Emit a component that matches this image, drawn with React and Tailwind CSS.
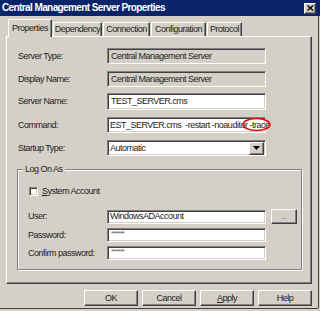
import React from "react";

const sunken =
  "border border-t-[#808080] border-l-[#808080] border-b-white border-r-white shadow-[inset_1px_1px_0_#404040,inset_-1px_-1px_0_#d4d0c8]";
const raised =
  "border border-t-white border-l-white border-b-[#404040] border-r-[#404040] shadow-[inset_-1px_-1px_0_#808080]";

function Row({ label, children, top }) {
  return (
    <div className={`flex items-center ${top}`}>
      <div className="w-[100px] pl-[11px] whitespace-nowrap">{label}</div>
      {children}
    </div>
  );
}

function Btn({ children }) {
  return (
    <div className={`${raised} w-[54px] h-[16px] flex items-center justify-center bg-[#d4d0c8]`}>
      {children}
    </div>
  );
}

export default function App() {
  const tabs = [
    ["Dependency", "w-[49px]"],
    ["Connection", "w-[47px]"],
    ["Configuration", "w-[55px]"],
    ["Protocol", "w-[35px]"],
  ];
  return (
    <div className="w-[320px] h-[311px] bg-[#d4d0c8] overflow-hidden font-['Liberation_Sans',Arial,sans-serif] text-[9px] tracking-[-0.5px] leading-none text-[#1c1c1c] flex flex-col">
      {/* title bar */}
      <div className="h-[16px] shrink-0 bg-[#0a246a] flex items-center justify-between pl-[2px] pr-[4px]">
        <span className="text-white font-bold text-[10px] tracking-[-0.6px]">Central Management Server Properties</span>
        <div className={`${raised} w-[12px] h-[11px] bg-[#d4d0c8] flex items-center justify-center`}>
          <svg width="7" height="6" viewBox="0 0 7 6">
            <path d="M0.5 0.5 L6 5.5 M6 0.5 L0.5 5.5" stroke="#000" strokeWidth="1.4" />
          </svg>
        </div>
      </div>

      <div className="flex flex-1">
        <div className="w-[318px] flex flex-col">
          <div className="pl-[6px] pr-[6px] pt-[2px] flex flex-col">
            {/* tabs */}
            <div className="h-[18px] flex items-end pl-[2px] relative z-10">
              <div className="h-[18px] w-[44px] bg-[#d4d0c8] border-t border-l border-t-white border-l-white border-r border-r-[#404040] shadow-[inset_-1px_0_0_#808080] flex items-center justify-center pb-[1px] -mb-[1px]">
                Properties
              </div>
              {tabs.map(([t, w]) => (
                <div
                  key={t}
                  className={`${w} h-[14px] ml-[1px] border-t border-l border-t-white border-l-white border-r border-r-[#404040] shadow-[inset_-1px_0_0_#808080] flex items-center justify-center`}
                >
                  {t}
                </div>
              ))}
            </div>
            {/* panel */}
            <div className={`${raised} h-[248px] flex flex-col`}>
              <Row label="Server Type:" top="mt-[11px]">
                <div className={`${sunken} w-[159px] h-[16px] flex items-center pl-[3px]`}>Central Management Server</div>
              </Row>
              <Row label="Display Name:" top="mt-[7px]">
                <div className={`${sunken} w-[159px] h-[16px] flex items-center pl-[3px]`}>Central Management Server</div>
              </Row>
              <Row label="Server Name:" top="mt-[6px]">
                <div className={`${sunken} w-[159px] h-[17px] bg-white flex items-center pl-[3px]`}>TEST_SERVER.cms</div>
              </Row>
              <Row label="Command:" top="mt-[7px]">
                <div className={`${sunken} w-[159px] h-[16px] bg-white flex items-center pl-[2px] relative overflow-visible whitespace-nowrap`}>
                  <span>EST_SERVER.cms&nbsp; -restart -noauditor -trace</span>
                  <svg className="absolute left-[134px] -top-[1px]" width="30" height="15" viewBox="0 0 30 15">
                    <ellipse cx="14.5" cy="7.5" rx="13.5" ry="6" fill="none" stroke="#e01010" strokeWidth="1.5" />
                  </svg>
                </div>
              </Row>
              <Row label="Startup Type:" top="mt-[7px]">
                <div className={`${sunken} w-[159px] h-[16px] bg-white flex items-center justify-between pl-[2px] pr-[1px]`}>
                  <span>Automatic</span>
                  <div className={`${raised} w-[15px] h-[13px] bg-[#d4d0c8] flex items-center justify-center`}>
                    <svg width="7" height="4" viewBox="0 0 7 4">
                      <path d="M0 0 H7 L3.5 4 Z" fill="#000" />
                    </svg>
                  </div>
                </div>
              </Row>

              {/* group box */}
              <div className="ml-[10px] mr-[9px] mt-[13px] h-[101px] relative border border-[#808080] shadow-[1px_1px_0_white,inset_1px_1px_0_white] flex flex-col">
                <div className="absolute -top-[5px] left-[5px] bg-[#d4d0c8] px-[2px]">Log On As</div>
                <div className="flex items-center ml-[11px] mt-[17px]">
                  <div className={`${sunken} w-[9px] h-[9px] bg-white`} />
                  <span className="ml-[4px]"><span className="underline">S</span>ystem Account</span>
                </div>
                <div className="flex items-center mt-[13px]">
                  <div className="w-[89px] pl-[10px] whitespace-nowrap">User:</div>
                  <div className={`${sunken} w-[159px] h-[14px] bg-white flex items-center pl-[2px]`}>WindowsADAccount</div>
                  <div className={`${raised} ml-[5px] w-[26px] h-[15px] flex items-center justify-center text-[#808080]`}>...</div>
                </div>
                <div className="flex items-center mt-[4px]">
                  <div className="w-[89px] pl-[10px] whitespace-nowrap">Password:</div>
                  <div className={`${sunken} w-[159px] h-[14px] bg-white flex items-start pl-[3px] pt-[1px] text-[7px] text-[#555]`}>******</div>
                </div>
                <div className="flex items-center mt-[4px]">
                  <div className="w-[89px] pl-[10px] whitespace-nowrap">Confirm password:</div>
                  <div className={`${sunken} w-[159px] h-[14px] bg-white flex items-start pl-[3px] pt-[1px] text-[7px] text-[#555]`}>******</div>
                </div>
              </div>
            </div>
            {/* buttons */}
            <div className="flex justify-end gap-[4px] mt-[6px]">
              <Btn>OK</Btn>
              <Btn>Cancel</Btn>
              <Btn><span><span className="underline">A</span>pply</span></Btn>
              <Btn>Help</Btn>
            </div>
          </div>
          <div className="flex-1" />
          <div className="h-[1px] bg-[#404040]" />
          <div className="h-[2px]" />
        </div>
        <div className="w-[1px] bg-[#404040] h-[292px]" />
        <div className="w-[1px]" />
      </div>
    </div>
  );
}
